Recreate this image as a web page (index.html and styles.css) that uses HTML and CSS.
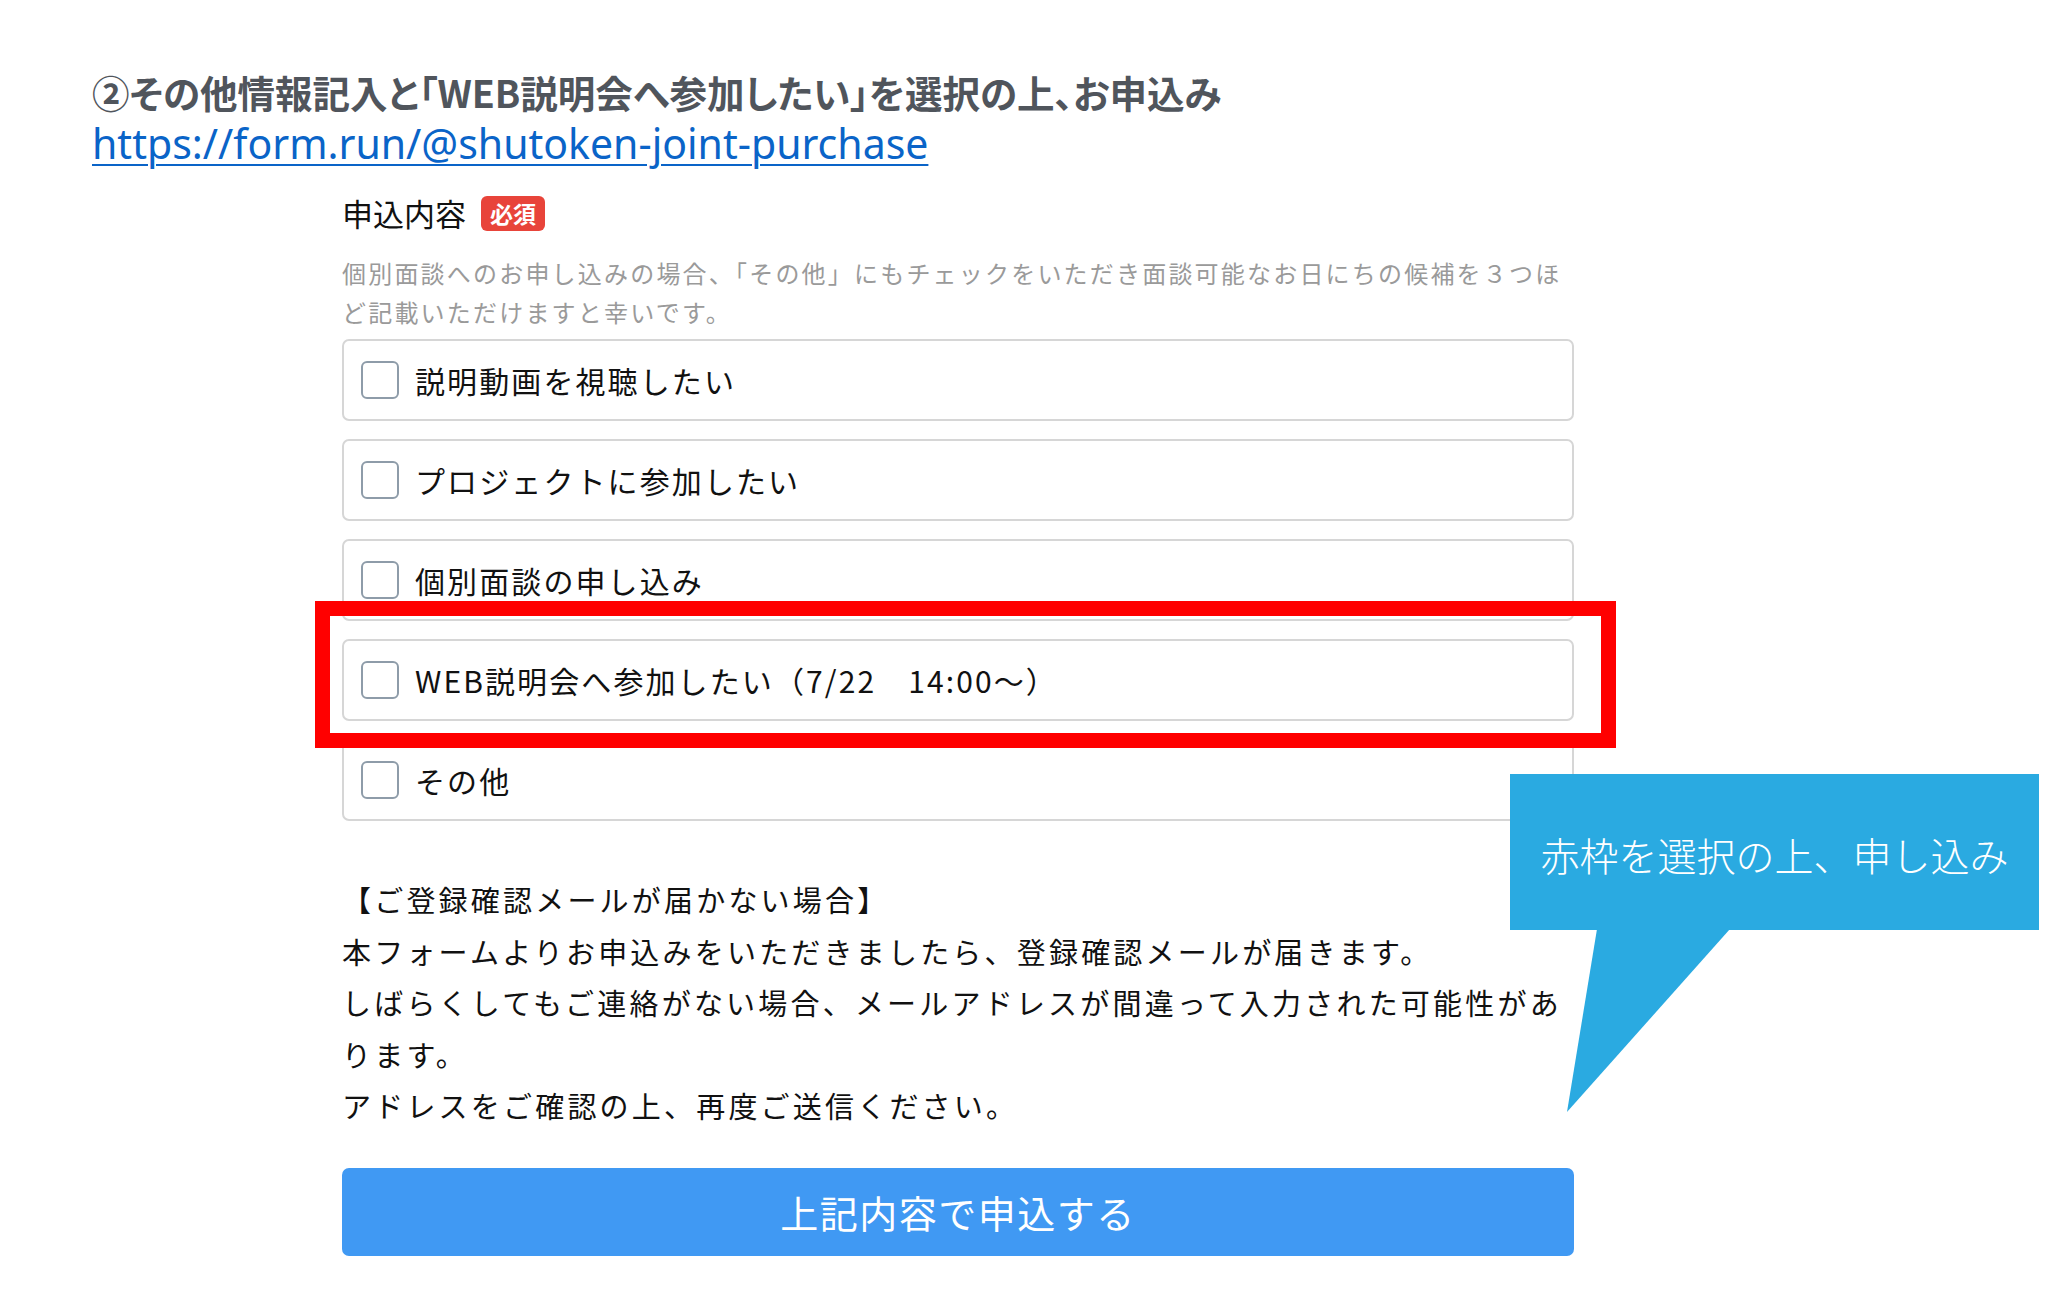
FILE: index.html
```html
<!DOCTYPE html>
<html lang="ja">
<head>
<meta charset="utf-8">
<title>申込フォーム</title>
<link rel="stylesheet" href="styles.css">
</head>
<body>
<div class="page">
  <h1 class="title">②その他情報記入と「WEB説明会へ参加したい」を選択の上、お申込み</h1>
  <a class="link" href="#">https://form.run/@shutoken-joint-purchase</a>
  <form class="form">
    <div class="field-label"><span class="label-text">申込内容</span><span class="badge">必須</span></div>
    <p class="help">個別面談へのお申し込みの場合、「その他」にもチェックをいただき面談可能なお日にちの候補を３つほど記載いただけますと幸いです。</p>
    <ul class="options">
      <li class="option"><span class="check"></span><span class="option-text">説明動画を視聴したい</span></li>
      <li class="option"><span class="check"></span><span class="option-text">プロジェクトに参加したい</span></li>
      <li class="option"><span class="check"></span><span class="option-text">個別面談の申し込み</span></li>
      <li class="option"><span class="check"></span><span class="option-text">WEB説明会へ参加したい（7/22　14:00～）</span></li>
      <li class="option"><span class="check"></span><span class="option-text">その他</span></li>
    </ul>
    <div class="note">
      <p>【ご登録確認メールが届かない場合】</p>
      <p>本フォームよりお申込みをいただきましたら、登録確認メールが届きます。</p>
      <p>しばらくしてもご連絡がない場合、メールアドレスが間違って入力された可能性があります。</p>
      <p>アドレスをご確認の上、再度ご送信ください。</p>
    </div>
    <button class="submit" type="button">上記内容で申込する</button>
  </form>
  <div class="highlight"></div>
  <div class="callout">
    <span class="callout-text">赤枠を選択の上、申し込み</span>
  </div>
  <svg class="callout-tail" width="164" height="184" viewBox="0 0 164 184"><polygon points="31,0 164,0 1,183" fill="#2aaae1"/></svg>
</div>
</body>
</html>
```

FILE: styles.css
```css
html, body {
  margin: 0;
  padding: 0;
  background: #ffffff;
}

body {
  font-family: "Noto Sans CJK JP", "Noto Sans", sans-serif;
  color: #111111;
}

.page {
  position: relative;
  width: 2061px;
  height: 1305px;
  box-sizing: border-box;
  padding: 68px 0 0 92px;
  overflow: hidden;
}

.title {
  margin: 0;
  font-size: 37.5px;
  line-height: 48px;
  font-weight: 700;
  color: #50555c;
  font-feature-settings: "palt";
  letter-spacing: 0;
}

.link {
  display: block;
  width: max-content;
  font-family: "Noto Sans", "Open Sans", sans-serif;
  font-size: 41px;
  line-height: 54px;
  color: #0a64c8;
  text-decoration: underline;
  text-decoration-thickness: 2px;
  text-underline-offset: 5px;
}

.form {
  margin: 23px 0 0 250px;
  width: 1232px;
}

.field-label {
  display: flex;
  align-items: center;
  height: 40px;
}

.label-text {
  font-size: 31px;
  line-height: 40px;
  color: #111111;
}

.badge {
  margin-left: 15px;
  height: 35px;
  padding: 0 9px;
  border-radius: 6px;
  background: #e8443a;
  color: #ffffff;
  font-size: 23px;
  font-weight: 700;
  line-height: 35px;
}

.help {
  margin: 20px 0 0;
  font-size: 24px;
  line-height: 39px;
  letter-spacing: 2.2px;
  color: #9a9a9a;
}

.options {
  list-style: none;
  margin: 8px 0 0;
  padding: 0;
  display: flex;
  flex-direction: column;
  gap: 18px;
}

.option {
  display: flex;
  align-items: center;
  height: 82px;
  box-sizing: border-box;
  border: 2px solid #d6d6d6;
  border-radius: 7px;
  padding-left: 17px;
}

.check {
  flex: none;
  width: 38px;
  height: 38px;
  box-sizing: border-box;
  border: 2px solid #8e9ca9;
  border-radius: 6px;
  background: #ffffff;
}

.option-text {
  margin-left: 16px;
  font-size: 30px;
  line-height: 40px;
  letter-spacing: 2.1px;
  color: #111111;
}

.note {
  margin-top: 53px;
  width: 1232px;
  font-size: 29px;
  line-height: 51.5px;
  letter-spacing: 3.2px;
  color: #111111;
}

.note p {
  margin: 0;
}

.submit {
  display: block;
  margin-top: 36px;
  width: 1232px;
  height: 88px;
  border: none;
  border-radius: 7px;
  background: #4099f3;
  color: #ffffff;
  font-family: "Noto Sans CJK JP", sans-serif;
  font-size: 38px;
  letter-spacing: 1.5px;
  padding: 0;
}

.highlight {
  position: absolute;
  left: 315px;
  top: 601px;
  width: 1301px;
  height: 147px;
  box-sizing: border-box;
  border: 15px solid #ff0000;
}

.callout {
  position: absolute;
  left: 1510px;
  top: 774px;
  width: 529px;
  height: 156px;
  box-sizing: border-box;
  padding-top: 4px;
  background: #2aaae1;
  display: flex;
  align-items: center;
  justify-content: center;
}

.callout-text {
  color: #ffffff;
  font-size: 39px;
  font-weight: 300;
  line-height: 48px;
  white-space: nowrap;
}

.callout-tail {
  position: absolute;
  left: 1566px;
  top: 929px;
  display: block;
}
```
